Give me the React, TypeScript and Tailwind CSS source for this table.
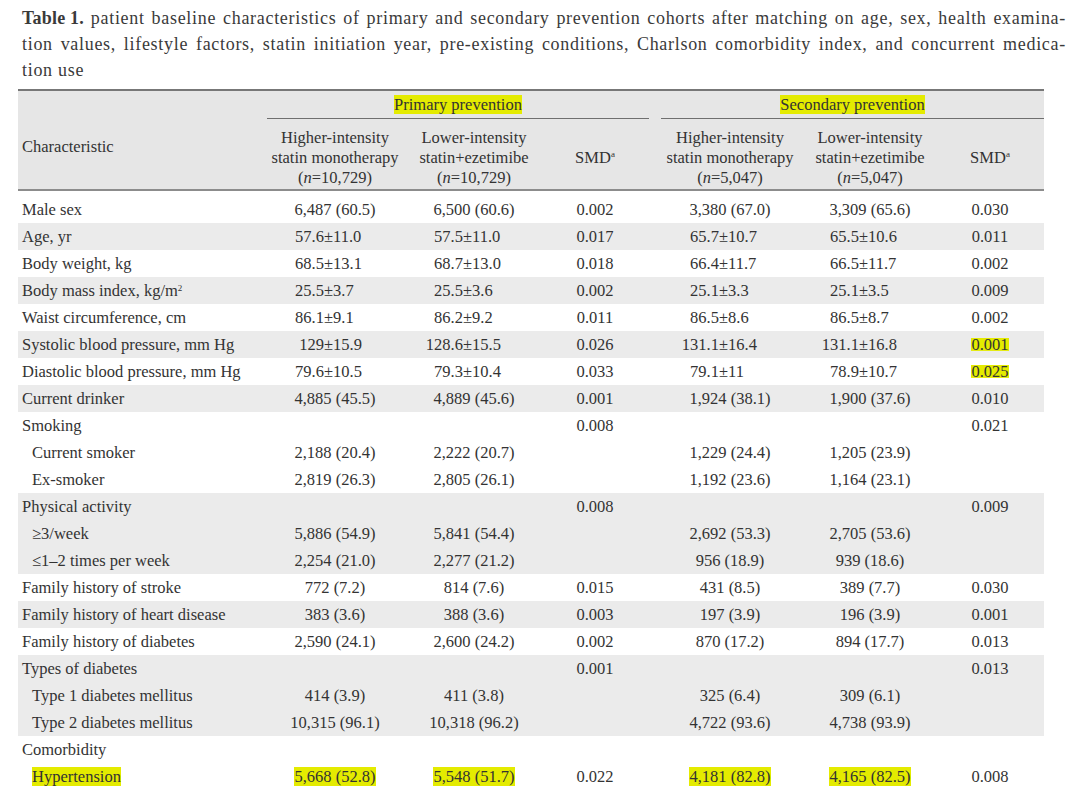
import React from "react";

type Row = {
  label: React.ReactNode;
  indent?: boolean;
  vals: string[];
  gray?: boolean;
  hlLabel?: boolean;
  hl?: number[];
};

const rows: Row[] = [
  { label: "Male sex", vals: ["6,487 (60.5)", "6,500 (60.6)", "0.002", "3,380 (67.0)", "3,309 (65.6)", "0.030"] },
  { label: "Age, yr", gray: true, vals: ["57.6±11.0", "57.5±11.0", "0.017", "65.7±10.7", "65.5±10.6", "0.011"] },
  { label: "Body weight, kg", vals: ["68.5±13.1", "68.7±13.0", "0.018", "66.4±11.7", "66.5±11.7", "0.002"] },
  {
    label: (
      <>
        Body mass index, kg/m<sup className="text-[9px] -top-[0.6em]">2</sup>
      </>
    ),
    gray: true,
    vals: ["25.5±3.7", "25.5±3.6", "0.002", "25.1±3.3", "25.1±3.5", "0.009"],
  },
  { label: "Waist circumference, cm", vals: ["86.1±9.1", "86.2±9.2", "0.011", "86.5±8.6", "86.5±8.7", "0.002"] },
  { label: "Systolic blood pressure, mm Hg", gray: true, vals: ["129±15.9", "128.6±15.5", "0.026", "131.1±16.4", "131.1±16.8", "0.001"], hl: [5] },
  { label: "Diastolic blood pressure, mm Hg", vals: ["79.6±10.5", "79.3±10.4", "0.033", "79.1±11", "78.9±10.7", "0.025"], hl: [5] },
  { label: "Current drinker", gray: true, vals: ["4,885 (45.5)", "4,889 (45.6)", "0.001", "1,924 (38.1)", "1,900 (37.6)", "0.010"] },
  { label: "Smoking", vals: ["", "", "0.008", "", "", "0.021"] },
  { label: "Current smoker", indent: true, vals: ["2,188 (20.4)", "2,222 (20.7)", "", "1,229 (24.4)", "1,205 (23.9)", ""] },
  { label: "Ex-smoker", indent: true, vals: ["2,819 (26.3)", "2,805 (26.1)", "", "1,192 (23.6)", "1,164 (23.1)", ""] },
  { label: "Physical activity", gray: true, vals: ["", "", "0.008", "", "", "0.009"] },
  { label: "≥3/week", indent: true, gray: true, vals: ["5,886 (54.9)", "5,841 (54.4)", "", "2,692 (53.3)", "2,705 (53.6)", ""] },
  { label: "≤1–2 times per week", indent: true, gray: true, vals: ["2,254 (21.0)", "2,277 (21.2)", "", "956 (18.9)", "939 (18.6)", ""] },
  { label: "Family history of stroke", vals: ["772 (7.2)", "814 (7.6)", "0.015", "431 (8.5)", "389 (7.7)", "0.030"] },
  { label: "Family history of heart disease", gray: true, vals: ["383 (3.6)", "388 (3.6)", "0.003", "197 (3.9)", "196 (3.9)", "0.001"] },
  { label: "Family history of diabetes", vals: ["2,590 (24.1)", "2,600 (24.2)", "0.002", "870 (17.2)", "894 (17.7)", "0.013"] },
  { label: "Types of diabetes", gray: true, vals: ["", "", "0.001", "", "", "0.013"] },
  { label: "Type 1 diabetes mellitus", indent: true, gray: true, vals: ["414 (3.9)", "411 (3.8)", "", "325 (6.4)", "309 (6.1)", ""] },
  { label: "Type 2 diabetes mellitus", indent: true, gray: true, vals: ["10,315 (96.1)", "10,318 (96.2)", "", "4,722 (93.6)", "4,738 (93.9)", ""] },
  { label: "Comorbidity", vals: ["", "", "", "", "", ""] },
  { label: "Hypertension", indent: true, hlLabel: true, vals: ["5,668 (52.8)", "5,548 (51.7)", "0.022", "4,181 (82.8)", "4,165 (82.5)", "0.008"], hl: [0, 1, 3, 4] },
];

const GRID = "grid grid-cols-[249px_136px_142px_104px_12px_138px_142px_103px]";
const HL = "bg-[#e4eb00]";
const HL_TIGHT =
  "bg-[linear-gradient(#e4eb00,#e4eb00)] bg-no-repeat bg-[length:100%_68%] bg-[position:0_55%]";

const TITLE1 =
  "patient baseline characteristics of primary and secondary prevention cohorts after matching on age, sex, health examina-";
const TITLE2 =
  "tion values, lifestyle factors, statin initiation year, pre-existing conditions, Charlson comorbidity index, and concurrent medica-";

function Val({ v, hl, tight }: { v: string; hl?: boolean; tight?: boolean }) {
  if (!v) return null;
  if (v.includes("±")) {
    const [a, b] = v.split("±");
    return (
      <span className="flex justify-center">
        <span className="w-[40px] text-right">{a}</span>
        <span>±</span>
        <span className="w-[53px] text-left">{b}</span>
      </span>
    );
  }
  if (hl) return <span className={tight ? HL_TIGHT : HL}>{v}</span>;
  return <span>{v}</span>;
}

function BodyRow({ r }: { r: Row }) {
  const isHl = (i: number) => (r.hl ? r.hl.includes(i) : false);
  return (
    <div className={`${GRID} h-[27px] leading-[27px] ${r.gray ? "bg-[#ebebeb]" : "bg-white"}`}>
      <div className={r.indent ? "pl-[14px]" : "pl-[4px]"}>
        {r.hlLabel ? <span className={HL}>{r.label}</span> : r.label}
      </div>
      <div className="text-center">
        <Val v={r.vals[0]} hl={isHl(0)} />
      </div>
      <div className="text-center">
        <Val v={r.vals[1]} hl={isHl(1)} />
      </div>
      <div className="text-center pr-[4px]">
        <Val v={r.vals[2]} hl={isHl(2)} tight />
      </div>
      <div />
      <div className="text-center">
        <Val v={r.vals[3]} hl={isHl(3)} />
      </div>
      <div className="text-center">
        <Val v={r.vals[4]} hl={isHl(4)} />
      </div>
      <div className="text-center pr-[5px]">
        <Val v={r.vals[5]} hl={isHl(5)} tight />
      </div>
    </div>
  );
}

function GroupHead({ n }: { n: string }) {
  return (
    <>
      <div className="flex h-[70px] flex-col items-center justify-end pb-[1px] leading-[20px]">
        <div>Higher-intensity</div>
        <div>statin monotherapy</div>
        <div>
          (<i>n</i>=<span>{n}</span>)
        </div>
      </div>
      <div className="flex h-[70px] flex-col items-center justify-end pb-[1px] leading-[20px]">
        <div>Lower-intensity</div>
        <div>statin+ezetimibe</div>
        <div>
          (<i>n</i>=<span>{n}</span>)
        </div>
      </div>
    </>
  );
}

function Smd({ pr }: { pr: string }) {
  return (
    <div className={`flex h-[70px] items-end justify-center pb-[21px] leading-[20px] ${pr}`}>
      <span>
        SMD<sup className="text-[9px] -top-[0.7em]">a</sup>
      </span>
    </div>
  );
}

function JustLine({ text, lead }: { text: string; lead?: React.ReactNode }) {
  const words = text.split(" ");
  return (
    <div className="flex justify-between gap-x-[4px] whitespace-nowrap">
      {lead}
      {words.map((w, i) => (
        <span key={i}>{w}</span>
      ))}
    </div>
  );
}

export default function App() {
  return (
    <div className="h-[793px] w-[1080px] overflow-hidden bg-white font-['Liberation_Serif',serif] text-[#333]">
      <div className="pl-[22px] pr-[14px] pt-[5px] text-[18px] leading-[26px] tracking-[0.7px] text-[#3a3a3a]">
        <JustLine text={TITLE1} lead={<b className="tracking-[0.2px]">Table 1.</b>} />
        <JustLine text={TITLE2} />
        <div>tion use</div>
      </div>

      <div className="ml-[18px] mt-[6px] w-[1026px] text-[16.5px]">
        <div className={`${GRID} grid-rows-[28px_70px] border-t-2 border-b-2 border-t-[#777] border-b-[#8c8c8c] bg-[#e6e6e6]`}>
          <div className="row-span-2 col-start-1 row-start-1 pl-[4px] pt-[46px] leading-[20px]">Characteristic</div>
          <div className="col-span-3 col-start-2 row-start-1 flex items-center justify-center border-b border-[#6f6f6f] leading-[19px]">
            <span className={HL}>Primary prevention</span>
          </div>
          <div className="col-span-3 col-start-6 row-start-1 flex items-center justify-center border-b border-[#6f6f6f] leading-[19px]">
            <span className={HL}>Secondary prevention</span>
          </div>
          <div className="col-start-2 row-start-2 col-span-2 grid grid-cols-[136px_142px]">
            <GroupHead n="10,729" />
          </div>
          <div className="col-start-4 row-start-2">
            <Smd pr="pr-[4px]" />
          </div>
          <div className="col-start-6 row-start-2 col-span-2 grid grid-cols-[138px_142px]">
            <GroupHead n="5,047" />
          </div>
          <div className="col-start-8 row-start-2">
            <Smd pr="pr-[5px]" />
          </div>
        </div>
        <div className="h-[5px]" />
        {rows.map((r, i) => (
          <BodyRow key={i} r={r} />
        ))}
      </div>
    </div>
  );
}
